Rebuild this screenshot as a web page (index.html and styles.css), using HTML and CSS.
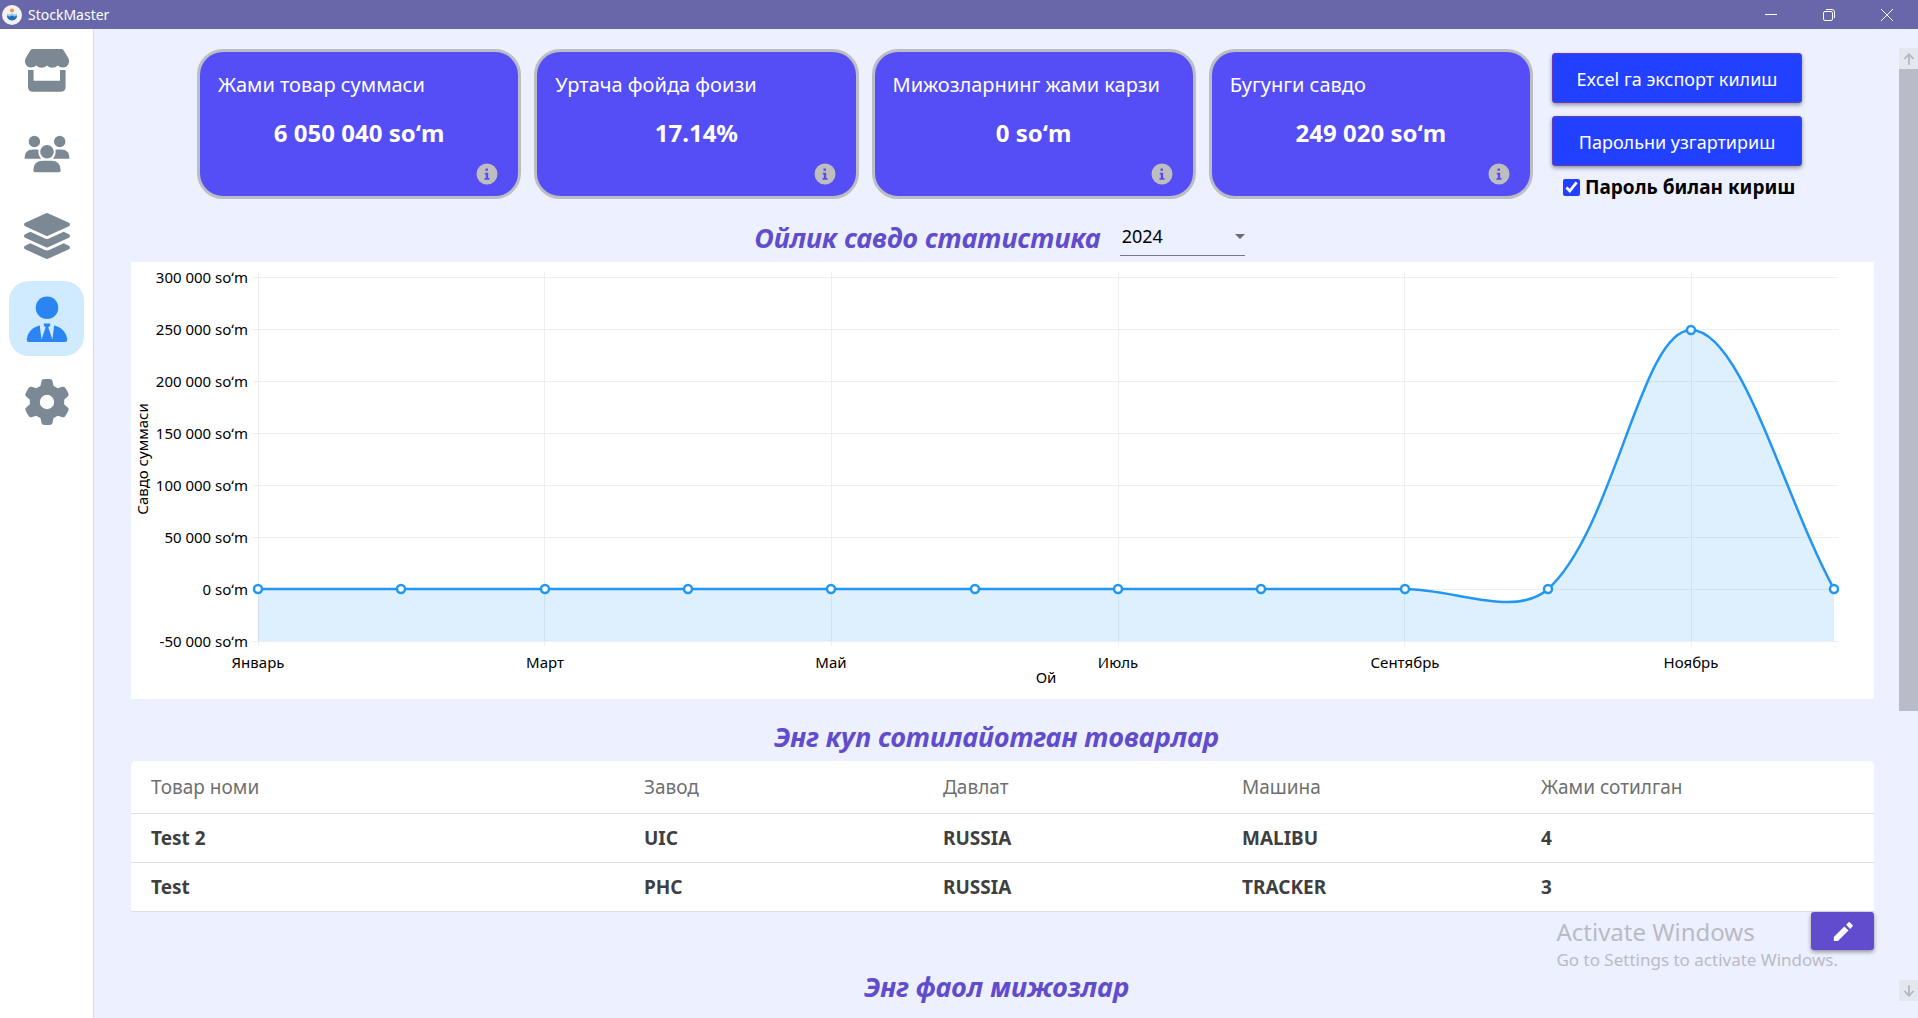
FILE: index.html
```html
<!DOCTYPE html>
<html lang="uz">
<head>
<meta charset="utf-8">
<title>StockMaster</title>
<link rel="stylesheet" href="styles.css">
</head>
<body>
<header class="titlebar">
  <svg class="logo" viewBox="0 0 20 20" aria-hidden="true">
    <circle cx="10" cy="10" r="10" fill="#f4f1ee"/>
    <circle cx="10" cy="5.6" r="2" fill="#f0913a"/>
    <path d="M5 8.6q2.500 1.600 5-.4q2.500 2 5 .4v2.600H5z" fill="#8fd0f2"/>
    <path d="M5 10.600q2.500 1.600 5 0q2.500 1.600 5 0q0 4.800-5 4.800t-5-4.800z" fill="#1d6fbd"/>
  </svg>
  <h1 class="app-name">StockMaster</h1>
  <div class="window-controls">
    <button class="window-button" aria-label="Minimize"><svg viewBox="0 0 14 14"><path d="M1 6.500h12"/></svg></button>
    <button class="window-button" aria-label="Restore"><svg viewBox="0 0 14 14"><rect x="1.500" y="3.500" width="9" height="9" rx="1.500"/><path d="M4 1.500h6a2.500 2.500 0 0 1 2.500 2.500v6"/></svg></button>
    <button class="window-button" aria-label="Close"><svg viewBox="0 0 14 14"><path d="M1 1l12 12M13 1L1 13"/></svg></button>
  </div>
</header>
<div class="shell">
  <nav class="sidebar">
    <a class="nav-item" href="#store" aria-label="Store"><svg viewBox="0 0 46 46"><path d="M8.500 2h29q1.200 0 1.900 1l4.600 7.500q2 3.500.2 7-1.700 3-5.200 3-3.300 0-5.300-2-2 2.300-5.300 2.300T23 18.500q-2.100 2.300-5.400 2.300t-5.300-2.300q-2 2-5.300 2-3.500 0-5.200-3-1.800-3.500.2-7L6.600 3q.7-1 1.900-1zM4 23h5.600v10.700H36V23h5.600v16.700q0 5-5 5H9q-5 0-5-5z"/></svg></a>
    <a class="nav-item" href="#clients" aria-label="Clients"><svg viewBox="0 0 46 46"><circle cx="10.400" cy="11.500" r="5.700"/><circle cx="35.700" cy="11.500" r="5.700"/><circle cx="23" cy="21.800" r="6.800"/><path d="M.5 28q0-8.600 8.500-8.600h3.500q1 0 2 .4-.8 5.300 2.700 9H1.500q-1 0-1-.8zM45.500 28q0-8.600-8.500-8.600h-3.500q-1 0-2 .4.800 5.300-2.700 9h15.700q1 0 1-.8zM9.300 40.500Q9.300 30.700 19 30.700h8q9.700 0 9.700 9.800 0 1.800-1.800 1.800H11q-1.700 0-1.700-1.800z"/></svg></a>
    <a class="nav-item" href="#products" aria-label="Products"><svg viewBox="0 0 512 512"><path d="M12.410 148.020l232.940 105.670c6.800 3.090 14.490 3.090 21.290 0l232.940-105.670c16.550-7.510 16.550-32.520 0-40.030L266.650 2.310a25.607 25.607 0 0 0-21.290 0L12.410 107.980c-16.550 7.510-16.550 32.530 0 40.040zm487.180 88.280l-58.090-26.330-161.640 73.270c-7.560 3.430-15.590 5.170-23.860 5.170s-16.290-1.740-23.860-5.170L70.510 209.970l-58.100 26.330c-16.550 7.500-16.550 32.500 0 40l232.940 105.590c6.800 3.080 14.490 3.080 21.290 0L499.590 276.300c16.550-7.500 16.550-32.500 0-40zm0 127.800l-57.870-26.230-161.860 73.370c-7.560 3.430-15.590 5.170-23.860 5.170s-16.290-1.740-23.860-5.170L70.290 337.870 12.410 364.100c-16.550 7.500-16.550 32.500 0 40l232.940 105.590c6.800 3.080 14.490 3.080 21.290 0L499.590 404.100c16.550-7.500 16.550-32.500 0-40z"/></svg></a>
    <a class="nav-item active" href="#owner" aria-label="Owner" aria-current="page"><svg viewBox="0 0 46 46"><circle cx="23" cy="11.700" r="11.300"/><path d="M2.700 43.500Q4 33 15.700 29.300L17.500 43.500l4.100-12-1.800-2V27.500h6.400v2l-1.900 2 4.100 12 1.800-14.200Q42 33 43.300 43.500 43.300 46 41 46H5Q2.700 46 2.700 43.500z"/></svg></a>
    <a class="nav-item" href="#settings" aria-label="Settings"><svg viewBox="0 0 512 512"><path d="M495.900 166.600c3.200 8.700 .5 18.400-6.400 24.600l-43.300 39.400c1.100 8.300 1.700 16.800 1.700 25.400s-.6 17.100-1.700 25.400l43.300 39.400c6.900 6.200 9.600 15.900 6.400 24.600c-4.400 11.900-9.700 23.300-15.800 34.300l-4.700 8.100c-6.600 11-14 21.400-22.100 31.200c-5.900 7.200-15.700 9.600-24.500 6.800l-55.700-17.700c-13.400 10.300-28.200 18.900-44 25.400l-12.500 57.100c-2 9.100-9 16.300-18.200 17.800c-13.800 2.300-28 3.500-42.500 3.500s-28.700-1.200-42.500-3.500c-9.200-1.500-16.200-8.700-18.200-17.800l-12.500-57.100c-15.800-6.500-30.600-15.100-44-25.400L83.100 425.900c-8.800 2.800-18.600 .3-24.500-6.800c-8.100-9.800-15.500-20.200-22.100-31.200l-4.700-8.100c-6.100-11-11.400-22.400-15.800-34.300c-3.200-8.700-.5-18.400 6.400-24.600l43.300-39.400C64.600 273.100 64 264.600 64 256s.6-17.100 1.700-25.400L22.400 191.200c-6.900-6.200-9.600-15.900-6.400-24.600c4.400-11.900 9.700-23.300 15.800-34.300l4.700-8.100c6.600-11 14-21.400 22.100-31.200c5.900-7.200 15.700-9.600 24.500-6.800l55.700 17.700c13.400-10.300 28.200-18.900 44-25.400l12.500-57.100c2-9.100 9-16.300 18.200-17.800C227.300 1.200 241.500 0 256 0s28.700 1.200 42.500 3.500c9.200 1.500 16.200 8.700 18.200 17.800l12.500 57.100c15.800 6.500 30.600 15.100 44 25.400l55.700-17.700c8.800-2.800 18.600-.3 24.500 6.800c8.100 9.800 15.500 20.200 22.100 31.200l4.700 8.100c6.100 11 11.400 22.400 15.800 34.300zM256 336a80 80 0 1 0 0-160 80 80 0 1 0 0 160z"/></svg></a>
  </nav>
  <main class="content">
    <section class="summary">
      <div class="cards">
        <article class="card"><h2 class="card-title">Жами товар суммаси</h2><p class="card-value">6 050 040 soʻm</p><button class="info" aria-label="Info"><svg viewBox="0 0 22 22"><circle cx="11" cy="11" r="10.500"/><path d="M9.500 5.500h2.500v2.300H9.500zM8.800 9.700H12.200V15h1.300v1.700H8.500V15h1.300v-3.600h-1z"/></svg></button></article>
        <article class="card"><h2 class="card-title">Уртача фойда фоизи</h2><p class="card-value">17.14%</p><button class="info" aria-label="Info"><svg viewBox="0 0 22 22"><circle cx="11" cy="11" r="10.500"/><path d="M9.500 5.500h2.500v2.300H9.500zM8.800 9.700H12.200V15h1.300v1.700H8.500V15h1.300v-3.600h-1z"/></svg></button></article>
        <article class="card"><h2 class="card-title">Мижозларнинг жами карзи</h2><p class="card-value">0 soʻm</p><button class="info" aria-label="Info"><svg viewBox="0 0 22 22"><circle cx="11" cy="11" r="10.500"/><path d="M9.500 5.500h2.500v2.300H9.500zM8.800 9.700H12.200V15h1.300v1.700H8.500V15h1.300v-3.600h-1z"/></svg></button></article>
        <article class="card"><h2 class="card-title">Бугунги савдо</h2><p class="card-value">249 020 soʻm</p><button class="info" aria-label="Info"><svg viewBox="0 0 22 22"><circle cx="11" cy="11" r="10.500"/><path d="M9.500 5.500h2.500v2.300H9.500zM8.800 9.700H12.200V15h1.300v1.700H8.500V15h1.300v-3.600h-1z"/></svg></button></article>
      </div>
      <div class="actions">
        <button class="action">Excel га экспорт килиш</button>
        <button class="action">Парольни узгартириш</button>
        <label class="check"><input type="checkbox" checked><span>Пароль билан кириш</span></label>
      </div>
    </section>
    <div class="chart-head">
      <h2 class="heading" id="sales-heading">Ойлик савдо статистика</h2>
      <div class="year-field"><select class="year" aria-labelledby="sales-heading"><option>2024</option></select></div>
    </div>
    <section class="chart">
      <svg viewBox="0 0 1743 437" role="img" aria-labelledby="sales-heading">
        <path class="grid" d="M122 15.500H1707M122 67.500H1707M122 119.500H1707M122 171.500H1707M122 223.500H1707M122 275.500H1707M122 327.500H1707M122 379.500H1707M127.500 10V384M413.500 10V384M700.500 10V384M987.500 10V384M1273.500 10V384M1560.500 10V384"/>
        <path class="area" d="M127 327H1274C1324 327 1384 356.500 1417 327C1484 266 1510 68 1560 68C1611 68 1653 236 1703 327V379H127z"/>
        <path class="line" d="M127 327H1274C1324 327 1384 356.500 1417 327C1484 266 1510 68 1560 68C1611 68 1653 236 1703 327"/>
        <g class="dots">
          <circle cx="127" cy="327" r="4"/><circle cx="270" cy="327" r="4"/><circle cx="414" cy="327" r="4"/><circle cx="557" cy="327" r="4"/><circle cx="700" cy="327" r="4"/><circle cx="844" cy="327" r="4"/><circle cx="987" cy="327" r="4"/><circle cx="1130" cy="327" r="4"/><circle cx="1274" cy="327" r="4"/><circle cx="1417" cy="327" r="4"/><circle cx="1560" cy="68" r="4"/><circle cx="1703" cy="327" r="4"/>
        </g>
        <g class="y-labels">
          <text x="117" y="21">300 000 soʻm</text><text x="117" y="73">250 000 soʻm</text><text x="117" y="125">200 000 soʻm</text><text x="117" y="177">150 000 soʻm</text><text x="117" y="229">100 000 soʻm</text><text x="117" y="281">50 000 soʻm</text><text x="117" y="333">0 soʻm</text><text x="117" y="385">-50 000 soʻm</text>
        </g>
        <g class="x-labels">
          <text x="127" y="406">Январь</text><text x="414" y="406">Март</text><text x="700" y="406">Май</text><text x="987" y="406">Июль</text><text x="1274" y="406">Сентябрь</text><text x="1560" y="406">Ноябрь</text>
          <text x="915" y="421">Ой</text>
          <text transform="translate(17 197) rotate(-90)">Савдо суммаси</text>
        </g>
      </svg>
    </section>
    <h2 class="heading section-heading">Энг куп сотилайотган товарлар</h2>
    <section class="products">
      <table class="table">
        <colgroup><col class="col-name"><col class="col"><col class="col"><col class="col"><col></colgroup>
        <thead><tr><th>Товар номи</th><th>Завод</th><th>Давлат</th><th>Машина</th><th>Жами сотилган</th></tr></thead>
        <tbody>
          <tr><td>Test 2</td><td>UIC</td><td>RUSSIA</td><td>MALIBU</td><td>4</td></tr>
          <tr><td>Test</td><td>PHC</td><td>RUSSIA</td><td>TRACKER</td><td>3</td></tr>
        </tbody>
      </table>
      <button class="edit" aria-label="Edit"><svg viewBox="0 0 24 24"><path d="M2 18.500V23h4.500L18 11.500 13.500 7zM22.300 7.200q.9-.9 0-1.800l-2.700-2.700q-.9-.9-1.800 0L15.300 5.200l4.500 4.500z"/></svg></button>
    </section>
    <h2 class="heading section-heading">Энг фаол мижозлар</h2>
  </main>
  <div class="scrollbar">
    <button class="scroll-button" aria-label="Scroll up"><svg viewBox="0 0 12 12"><path d="M6 11V2M2 6l4-4 4 4"/></svg></button>
    <div class="track"><div class="thumb"></div></div>
    <button class="scroll-button" aria-label="Scroll down"><svg viewBox="0 0 12 12"><path d="M6 1v9M2 6l4 4 4-4"/></svg></button>
  </div>
</div>
<div class="watermark"><p class="watermark-title">Activate Windows</p><p class="watermark-text">Go to Settings to activate Windows.</p></div>
</body>
</html>
```

FILE: styles.css
```css
* { box-sizing: border-box; }
body {
  margin: 0;
  height: 100vh;
  display: flex;
  flex-direction: column;
  overflow: hidden;
  background: #edf0ff;
  color: #000;
  font-family: "Noto Sans", "Open Sans", sans-serif;
  font-size: 19px;
}
h1, h2, p { margin: 0; }
button { border: 0; padding: 0; background: none; font: inherit; cursor: pointer; }

.titlebar {
  display: flex;
  align-items: center;
  gap: 6px;
  height: 29px;
  padding: 0 2px;
  background: #6767aa;
  color: #fff;
}
.logo { width: 20px; height: 20px; }
.app-name { font-size: 14px; font-weight: 400; line-height: 20px; }
.window-controls { display: flex; align-self: stretch; margin-left: auto; }
.window-button { display: grid; place-items: center; width: 58px; }
.window-button svg { width: 14px; height: 14px; fill: none; stroke: #fff; }

.shell { display: flex; flex: 1; min-height: 0; }
.sidebar {
  display: flex;
  flex-direction: column;
  flex: none;
  gap: 8px;
  width: 94px;
  padding: 3px 9px;
  border-right: 1px solid #d9dce3;
  background: #fff;
}
.nav-item {
  display: grid;
  place-items: center;
  height: 75px;
  border-radius: 20px;
  fill: #7c8894;
}
.nav-item svg { width: 46px; height: 46px; }
.nav-item.active { background: #d0eaff; fill: #2a85f2; }

.content { flex: 1; min-width: 0; padding: 20px 25px 0 37px; overflow: hidden; }
.summary { display: flex; gap: 19px; padding: 0 72px 0 66px; }
.cards { display: grid; grid-template-columns: repeat(4, 1fr); flex: 1; gap: 13px; }
.card {
  display: flex;
  flex-direction: column;
  height: 150px;
  padding: 19px 18px 11px;
  border: 3px solid #bdbdc4;
  border-radius: 26px;
  background: #554ef7;
  color: #fff;
}
.card-title { font-size: 20px; font-weight: 400; line-height: 28px; white-space: nowrap; }
.card-value { margin-top: 18px; font-size: 24px; font-weight: 700; line-height: 32px; text-align: center; }
.info { align-self: flex-end; width: 22px; height: 22px; margin: auto 2px 0 0; }
.info svg { display: block; width: 22px; height: 22px; fill: #bebebe; }
.info path { fill: #554ef7; }

.actions { display: flex; flex-direction: column; width: 250px; padding-top: 4px; }
.action {
  height: 50px;
  margin-bottom: 13px;
  padding-top: 2px;
  border: 1px solid #673ab7;
  border-radius: 3px;
  background: #2240ff;
  box-shadow: 0 2px 4px rgba(0, 0, 0, .4);
  color: #fff;
  font-size: 18px;
}
.check { display: flex; align-items: center; gap: 5px; padding-left: 11px; font-weight: 700; line-height: 28px; margin-top: -6px; white-space: nowrap; }
.check input { flex: none; width: 17px; height: 17px; margin: 0; accent-color: #2240ff; }

.heading { color: #614ccd; font-size: 27px; font-style: italic; font-weight: 700; line-height: 36px; text-align: center; }
.section-heading { padding: 0 12px 6px 0; }
.chart-head { display: flex; justify-content: center; align-items: flex-end; gap: 19px; height: 61px; padding: 0 6px 6px 0; }
.year-field { position: relative; }
.year-field::after {
  content: "";
  position: absolute;
  top: 14px;
  right: 0;
  border: 5px solid transparent;
  border-top-color: #6b6b75;
  border-bottom: 0;
  pointer-events: none;
}
.year {
  display: block;
  appearance: none;
  width: 125px;
  height: 36px;
  padding: 0 0 4px 2px;
  border: 0;
  border-bottom: 1px solid #77778a;
  border-radius: 0;
  background: none;
  color: #000;
  font: inherit;
  font-size: 18px;
}
.chart { margin-bottom: 20px; background: #fff; }
.chart svg { display: block; width: 100%; }
.chart text { font-size: 15px; }
.grid { fill: none; stroke: #efefef; stroke-width: 1; }
.area { fill: #2196f3; fill-opacity: .15; }
.line { fill: none; stroke: #2196f3; stroke-width: 2.500; }
.dots { fill: #fff; stroke: #2196f3; stroke-width: 2.500; }
.y-labels { text-anchor: end; }
.x-labels { text-anchor: middle; }

.products { position: relative; padding-bottom: 57px; }
.table { width: 100%; table-layout: fixed; border-spacing: 0; border-radius: 5px 5px 0 0; background: #fff; color: #3f3f3f; }
.col-name { width: 493px; }
.col { width: 299px; }
.table th, .table td { height: 49px; padding: 0 20px; border-bottom: 1px solid #dfdfe2; text-align: left; }
.table th { height: 53px; color: #6f6f6f; font-weight: 400; }
.table td { font-weight: 700; }
.edit {
  position: absolute;
  right: 0;
  bottom: 19px;
  display: grid;
  place-items: center;
  width: 63px;
  height: 38px;
  border-radius: 3px;
  background: #614ccd;
  box-shadow: 0 2px 4px rgba(0, 0, 0, .4);
}
.edit svg { width: 22px; height: 22px; fill: #fff; }

.scrollbar { display: flex; flex-direction: column; flex: none; width: 19px; padding: 19px 0 17px; }
.scroll-button { display: grid; place-items: center; height: 21px; background: #e5e7ee; }
.scroll-button svg { width: 14px; height: 14px; fill: none; stroke: #b3b5c0; stroke-width: 1.500; }
.track { flex: 1; }
.thumb { height: 70.500%; background: #b9bbc8; }

.watermark { position: absolute; right: 80px; bottom: 46px; color: #b9bbc4; pointer-events: none; }
.watermark-title { font-size: 24px; line-height: 32px; }
.watermark-text { font-size: 17px; line-height: 24px; }
```
